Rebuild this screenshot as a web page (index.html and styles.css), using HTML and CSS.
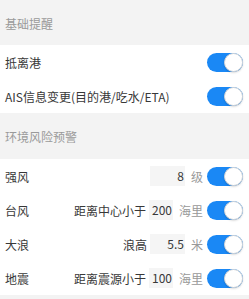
FILE: index.html
```html
<!DOCTYPE html>
<html lang="zh-cn">
<head>
    <meta charset="UTF-8"/>
    <title>提醒设置</title>
    <link rel="stylesheet" href="styles.css">
</head>
<body>
<div class="page">
    <div class="group-title">基础提醒</div>
    <div class="group">
        <div class="cell">
            <span class="label">抵离港</span>
            <span class="switch on"><i class="knob"></i></span>
        </div>
        <div class="cell">
            <span class="label">AIS信息变更(目的港/吃水/ETA)</span>
            <span class="switch on"><i class="knob"></i></span>
        </div>
    </div>

    <div class="group-title group-title-lg">环境风险预警</div>
    <div class="group">
        <div class="cell">
            <span class="label">强风</span>
            <span class="extra">
                <span class="num num-wide">8</span>
                <span class="unit">级</span>
            </span>
            <span class="switch on"><i class="knob"></i></span>
        </div>
        <div class="cell">
            <span class="label">台风</span>
            <span class="extra">
                <span class="cond">距离中心小于</span>
                <span class="num">200</span>
                <span class="unit">海里</span>
            </span>
            <span class="switch on"><i class="knob"></i></span>
        </div>
        <div class="cell">
            <span class="label">大浪</span>
            <span class="extra">
                <span class="cond">浪高</span>
                <span class="num num-wide">5.5</span>
                <span class="unit">米</span>
            </span>
            <span class="switch on"><i class="knob"></i></span>
        </div>
        <div class="cell">
            <span class="label">地震</span>
            <span class="extra">
                <span class="cond">距离震源小于</span>
                <span class="num">100</span>
                <span class="unit">海里</span>
            </span>
            <span class="switch on"><i class="knob"></i></span>
        </div>
    </div>
</div>
</body>
</html>
```

FILE: styles.css
```css
html, body {
    margin: 0;
    height: 100%;
    background: #f3f3f3;
}

body {
    font-family: "Noto Sans CJK SC", "Liberation Sans", sans-serif;
    font-size: 12px;
    color: #383838;
}

.group-title {
    height: 45px;
    line-height: 43px;
    padding: 2px 0 0 5px;
    box-sizing: border-box;
    color: #9a9a9a;
    background: #f3f3f3;
}

.group-title-lg {
    height: 46px;
    line-height: 44px;
}

.group {
    background: #fff;
}

.group:first-of-type {
    padding-bottom: 1px;
}

.cell {
    height: 34px;
    display: flex;
    align-items: center;
    padding: 0 6px 0 5px;
}

.label {
    flex: 1;
    white-space: nowrap;
}

.extra {
    display: flex;
    align-items: center;
    margin-right: 4px;
}

.cond {
    margin-right: 3px;
}

.num {
    box-sizing: border-box;
    width: 24px;
    height: 20px;
    line-height: 20px;
    padding-right: 1px;
    text-align: right;
    background: #f5f5f5;
}

.num-wide {
    width: 35px;
}

.unit {
    margin-left: 6px;
    color: #999;
}

.switch {
    position: relative;
    box-sizing: border-box;
    width: 36px;
    height: 19px;
    border-radius: 10px;
    background: #e5e5e5;
    flex: none;
}

.switch.on {
    background: #1a88f5;
}

.knob {
    position: absolute;
    top: 0;
    right: 0;
    box-sizing: border-box;
    width: 19px;
    height: 19px;
    border-radius: 50%;
    background: #fff;
    border: 1px solid #d8d8d8;
    box-shadow: 0 1px 2px rgba(0, 0, 0, .15);
}
```
